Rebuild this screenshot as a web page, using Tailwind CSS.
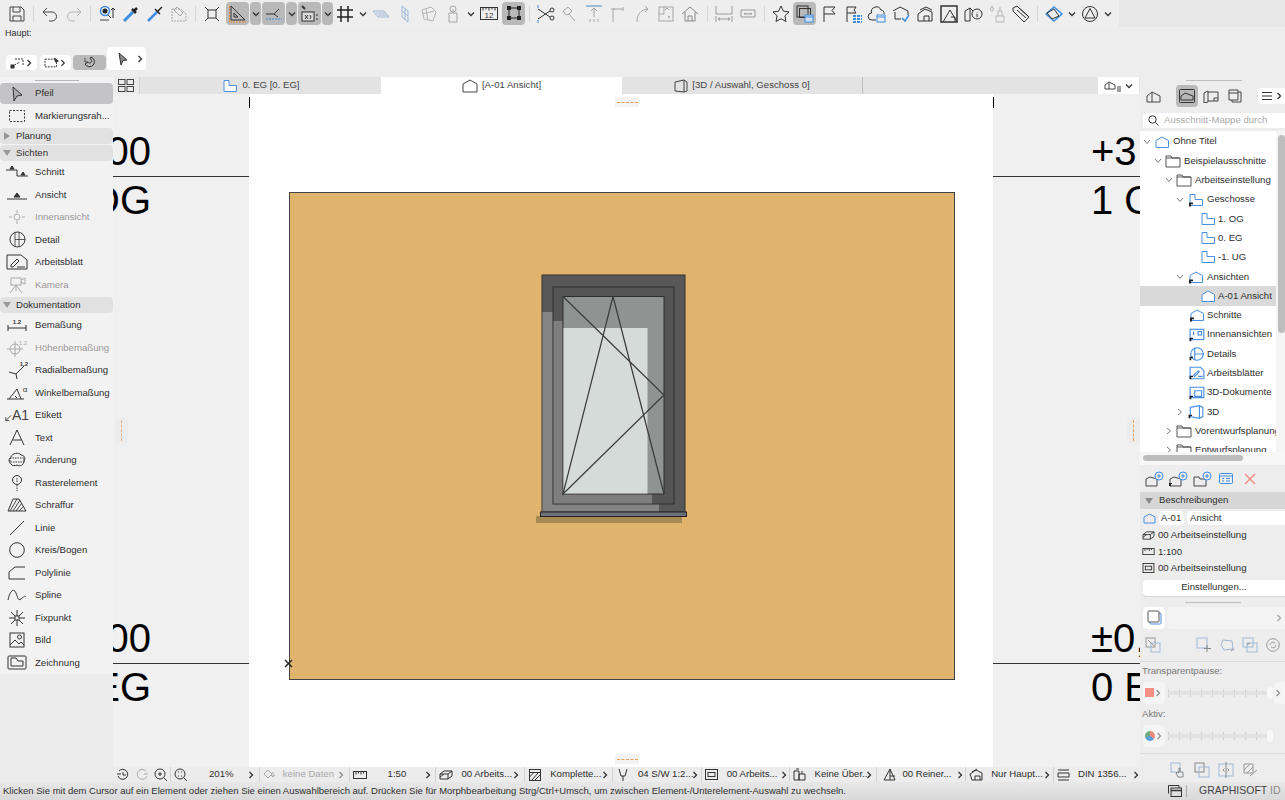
<!DOCTYPE html>
<html lang="de">
<head>
<meta charset="UTF-8" />
<title>Archicad</title>
<script src="https://cdn.jsdelivr.net/npm/@tailwindcss/browser@4"></script>
</head>
<body class="w-[1285px] h-[800px] overflow-hidden bg-[#ececec] text-[#2e2e2e] text-[9.6px] font-['Liberation_Sans',Arial,sans-serif]">

<!-- shared icons -->
<svg class="hidden">
  <symbol id="folder" viewBox="0 0 16 14"><path d="M1 3V2h5l1 2h8v9H1z" fill="none" stroke="#555"/><path d="M1 4h14" stroke="#555" fill="none"/></symbol>
  <symbol id="floor" viewBox="0 0 16 14"><path d="M2 1.500h5v5h7.500v6H2z" fill="#fff" stroke="#4a90e2"/></symbol>
  <symbol id="elev" viewBox="0 0 16 14"><path d="M2 5.500L8 2l6.500 3.500v7H2z" fill="#fff" stroke="#4a90e2"/></symbol>
  <symbol id="short" viewBox="0 0 16 14"><path d="M1 13.500V9.500h4v1.800H3v2.200z" fill="#222"/></symbol>
  <symbol id="chev" viewBox="0 0 8 8"><path d="M2.500 1L5.500 4L2.500 7" fill="none" stroke="#333" stroke-width="1.300"/></symbol>
  <symbol id="down" viewBox="0 0 8 8"><path d="M1 2.500L4 5.500L7 2.500" fill="none" stroke="#333" stroke-width="1.300"/></symbol>
  <symbol id="tdown" viewBox="0 0 8 8"><path d="M1 2L4 5.500L7 2" fill="none" stroke="#777" stroke-width="1"/></symbol>
  <symbol id="tright" viewBox="0 0 8 8"><path d="M2 1L5.500 4L2 7" fill="none" stroke="#777" stroke-width="1"/></symbol>
</svg>

<!-- top toolbar -->
<div class="h-[77px] bg-[#ededed]">
  <div class="h-[27px] w-full bg-[#e7e7e7]">
    <div class="h-[27px] w-[1119px] bg-[#eeeeee] flex items-center pl-[5px]">
      <div class="w-6 h-[23px] flex items-center justify-center"><svg class="w-[18px] h-[18px]" viewBox="0 0 18 18" fill="none" stroke="#444"><path d="M2 2h11l3 3v11H2z"/><path d="M5 2v5h7V2M5 16v-5h8v5"/></svg></div>
      <div class="w-[9px] flex justify-center"><div class="w-px h-4 bg-[#d5d5d5]"></div></div>
      <div class="w-6 h-[23px] flex items-center justify-center"><svg class="w-[18px] h-[18px]" viewBox="0 0 18 18" fill="none" stroke="#444"><path d="M6 3L2 7l4 4M2 7h9a4.500 4.500 0 0 1 0 9H8"/></svg></div>
      <div class="w-6 h-[23px] flex items-center justify-center"><svg class="w-[18px] h-[18px]" viewBox="0 0 18 18" fill="none" stroke="#b5b5b5"><path d="M12 3l4 4-4 4M16 7H7a4.500 4.500 0 0 0 0 9h3"/></svg></div>
      <div class="w-[9px] flex justify-center"><div class="w-px h-4 bg-[#d5d5d5]"></div></div>
      <div class="w-6 h-[23px] flex items-center justify-center"><svg class="w-5 h-5" viewBox="0 0 20 20" fill="none"><circle cx="8" cy="7" r="4.500" stroke="#3f8de0" stroke-width="1.500"/><circle cx="8" cy="7" r="2.500" fill="#222"/><path d="M11 11l3 3M3 16h9" stroke="#444"/><path d="M16 14V4M14 6l2-2 2 2" stroke="#333"/></svg></div>
      <div class="w-6 h-[23px] flex items-center justify-center"><svg class="w-5 h-5" viewBox="0 0 20 20" fill="none"><path d="M3 17l9-9" stroke="#3f8de0" stroke-width="3"/><path d="M11 5l4 4M13 7l3-3" stroke="#222" stroke-width="2.500"/></svg></div>
      <div class="w-6 h-[23px] flex items-center justify-center"><svg class="w-5 h-5" viewBox="0 0 20 20" fill="none"><path d="M3 17l9-9" stroke="#3f8de0" stroke-width="2.500"/><path d="M10 5l5 5M13 7l4-4" stroke="#222" stroke-width="1.500"/></svg></div>
      <div class="w-6 h-[23px] flex items-center justify-center"><svg class="w-5 h-5" viewBox="0 0 20 20" fill="none" stroke="#a5a5a5"><path d="M3 5h9l5 5v7H3z" stroke-dasharray="2 1"/><path d="M8 3l6 6-3 3-6-6z"/></svg></div>
      <div class="w-[9px] flex justify-center"><div class="w-px h-4 bg-[#d5d5d5]"></div></div>
      <div class="w-6 h-[23px] flex items-center justify-center"><svg class="w-4 h-4" viewBox="0 0 16 16" fill="none" stroke="#333"><rect x="4" y="4" width="8" height="8"/><path d="M1 1l3 3M15 1l-3 3M1 15l3-3M15 15l-3-3"/></svg></div>
      <div class="w-[23px] h-[23px] ml-[2px] rounded bg-[#b9b9b9] flex items-center justify-center"><svg class="w-5 h-5" viewBox="0 0 20 20" fill="none"><path d="M3 2v14h14z" stroke="#333"/><path d="M6 9v4h4z" stroke="#333"/><path d="M2 18h16M1.500 2v16" stroke="#e58a2e" stroke-dasharray="2 1"/></svg></div>
      <div class="w-[11px] h-[23px] ml-[1px] rounded bg-[#b9b9b9] flex items-center justify-center"><svg class="w-2 h-2"><use href="#down"/></svg></div>
      <div class="w-[23px] h-[23px] ml-[1px] rounded bg-[#b9b9b9] flex items-center justify-center"><svg class="w-5 h-5" viewBox="0 0 20 20" fill="none"><path d="M2 10h8l5-5M10 10l4 3" stroke="#333"/><path d="M2 15h16" stroke="#3f8de0" stroke-dasharray="2 1"/></svg></div>
      <div class="w-[11px] h-[23px] ml-[1px] rounded bg-[#b9b9b9] flex items-center justify-center"><svg class="w-2 h-2"><use href="#down"/></svg></div>
      <div class="w-[23px] h-[23px] ml-[1px] rounded bg-[#b9b9b9] flex items-center justify-center"><svg class="w-5 h-5" viewBox="0 0 20 20" fill="none" stroke="#333"><path d="M2 2l3 3" stroke-width="2"/><rect x="2" y="8" width="12" height="9" fill="#ddd"/><path d="M16 11h2M16 15h2M5 11l3 4M8 11l-3 4M10 11l1 2-1 2"/></svg></div>
      <div class="w-[11px] h-[23px] ml-[1px] rounded bg-[#b9b9b9] flex items-center justify-center"><svg class="w-2 h-2"><use href="#down"/></svg></div>
      <div class="w-6 h-[23px] flex items-center justify-center"><svg class="w-[18px] h-[18px]" viewBox="0 0 18 18" fill="none" stroke="#222" stroke-width="1.500"><path d="M5 1v16M12 1v16M1 5h16M1 12h16"/></svg></div>
      <div class="w-3 flex justify-center"><svg class="w-2 h-2"><use href="#down"/></svg></div>
      <div class="w-6 h-[23px] flex items-center justify-center"><svg class="w-5 h-5" viewBox="0 0 20 20" fill="none" stroke="#9db9d8"><path d="M2 7h11l5 6H7z"/><path d="M5 9h9M7 11h9"/></svg></div>
      <div class="w-6 h-[23px] flex items-center justify-center"><svg class="w-5 h-5" viewBox="0 0 20 20" fill="none" stroke="#9db9d8"><path d="M7 2l6 5v11l-6-5z"/><path d="M7 7l6 5M10 4v12"/></svg></div>
      <div class="w-6 h-[23px] flex items-center justify-center"><svg class="w-5 h-5" viewBox="0 0 20 20" fill="none" stroke="#b5b5b5"><path d="M3 6l9-3 5 5-3 9-9-2z"/><path d="M7 5l2 11M3 10l12-3"/></svg></div>
      <div class="w-6 h-[23px] flex items-center justify-center"><svg class="w-5 h-5" viewBox="0 0 20 20" fill="none" stroke="#a5a5a5"><path d="M6 18V9h8v9zM10 9V5"/><circle cx="10" cy="5" r="3"/></svg></div>
      <div class="w-3 flex justify-center"><svg class="w-2 h-2"><use href="#down"/></svg></div>
      <div class="w-6 h-[23px] flex items-center justify-center"><svg class="w-5 h-5" viewBox="0 0 20 20" fill="none" stroke="#333"><rect x="1.500" y="3.500" width="17" height="12"/><path d="M4 3.500v3M7 3.500v2M10 3.500v3M13 3.500v2M16 3.500v3"/><text x="10" y="14" font-size="8" fill="#333" stroke="none" text-anchor="middle">12</text></svg></div>
      <div class="w-[23px] h-[23px] ml-[1px] rounded bg-[#b9b9b9] flex items-center justify-center"><svg class="w-[18px] h-[18px]" viewBox="0 0 18 18" fill="none" stroke="#222"><rect x="4" y="3" width="10" height="10"/><rect x="2.500" y="1.500" width="3" height="3" fill="#222"/><rect x="12.500" y="1.500" width="3" height="3" fill="#222"/><rect x="2.500" y="11.500" width="3" height="3" fill="#222"/><rect x="12.500" y="11.500" width="3" height="3" fill="#222"/></svg></div>
      <div class="w-[9px] flex justify-center"><div class="w-px h-4 bg-[#d5d5d5]"></div></div>
      <div class="w-6 h-[23px] flex items-center justify-center"><svg class="w-5 h-5" viewBox="0 0 20 20" fill="none" stroke="#333"><path d="M2 5l12 8M2 15l12-8"/><circle cx="16" cy="6" r="2"/><circle cx="16" cy="14" r="2"/><path d="M2 1v3M2 16v3" stroke="#3f8de0"/></svg></div>
      <div class="w-6 h-[23px] flex items-center justify-center"><svg class="w-5 h-5" viewBox="0 0 20 20" fill="none" stroke="#a5a5a5"><path d="M3 7l5-4 4 4-3 3 6 7M3 7l3 4 3-1"/></svg></div>
      <div class="w-6 h-[23px] flex items-center justify-center"><svg class="w-5 h-5" viewBox="0 0 20 20" fill="none" stroke="#a5a5a5"><path d="M2 2h16" stroke="#9db9d8" stroke-width="2"/><path d="M10 4v9M7 7l3-3 3 3M6 18v-3M10 18v-3M14 18v-3"/></svg></div>
      <div class="w-6 h-[23px] flex items-center justify-center"><svg class="w-5 h-5" viewBox="0 0 20 20" fill="none" stroke="#a5a5a5"><path d="M5 18V5h10M3 5h4M15 3v4"/></svg></div>
      <div class="w-6 h-[23px] flex items-center justify-center"><svg class="w-5 h-5" viewBox="0 0 20 20" fill="none" stroke="#a5a5a5"><path d="M5 18C5 10 9 6 15 5M13 2l3 3-3 3"/></svg></div>
      <div class="w-6 h-[23px] flex items-center justify-center"><svg class="w-5 h-5" viewBox="0 0 20 20" fill="none" stroke="#a5a5a5"><rect x="3" y="3" width="14" height="14"/><path d="M3 10h5V3M9 6l2-2 2 2M12 14l2-1-2-1"/></svg></div>
      <div class="w-6 h-[23px] flex items-center justify-center"><svg class="w-5 h-5" viewBox="0 0 20 20" fill="none" stroke="#888"><path d="M2 10l8-7 8 7M5 8v9h10V8M8 17v-5h4v5"/></svg></div>
      <div class="w-[9px] ml-[1px] flex justify-center"><div class="w-px h-4 bg-[#d5d5d5]"></div></div>
      <div class="w-6 h-[23px] flex items-center justify-center"><svg class="w-5 h-5" viewBox="0 0 20 20" fill="none" stroke="#999"><path d="M2 2v8h16V2M2 12v6M18 12v6M4 15h12M4 15l2-1.500M4 15l2 1.500M16 15l-2-1.500M16 15l-2 1.500"/></svg></div>
      <div class="w-6 h-[23px] flex items-center justify-center"><svg class="w-5 h-5" viewBox="0 0 20 20" fill="none" stroke="#999"><path d="M3 6h14v7H3zM6 10h8M6 10l2-1M14 10l-2-1"/></svg></div>
      <div class="w-[9px] flex justify-center"><div class="w-px h-4 bg-[#d5d5d5]"></div></div>
      <div class="w-6 h-[23px] flex items-center justify-center"><svg class="w-5 h-5" viewBox="0 0 20 20" fill="none" stroke="#333"><path d="M10 2l2.400 5.200 5.600.7-4.100 3.900 1.100 5.700-5-2.800-5 2.800 1.100-5.700L2 7.900l5.600-.7z"/></svg></div>
      <div class="w-[23px] h-[23px] rounded bg-[#b9b9b9] flex items-center justify-center"><svg class="w-5 h-5" viewBox="0 0 20 20" fill="none"><rect x="2" y="2" width="11" height="11" stroke="#333"/><rect x="4.500" y="4.500" width="11" height="9" stroke="#333"/><rect x="10" y="11" width="8" height="7" fill="#cfe0f5" stroke="#3f8de0"/><path d="M10 13h8" stroke="#3f8de0"/></svg></div>
      <div class="w-6 h-[23px] ml-px flex items-center justify-center"><svg class="w-5 h-5" viewBox="0 0 20 20" fill="none" stroke="#333"><path d="M5 18V3h11l-3 3.500 3 3.500H5"/></svg></div>
      <div class="w-6 h-[23px] flex items-center justify-center"><svg class="w-5 h-5" viewBox="0 0 20 20" fill="none"><path d="M4 18V3h9l-2 3 2 3H4" stroke="#333"/><path d="M10 12h9M10 15h9M10 18h9" stroke="#3f8de0" stroke-width="2" stroke-dasharray="3 1"/></svg></div>
      <div class="w-6 h-[23px] flex items-center justify-center"><svg class="w-5 h-5" viewBox="0 0 20 20" fill="none"><path d="M9 16H5a3.500 3.500 0 0 1-.500-7A5 5 0 0 1 14 6a3.500 3.500 0 0 1 3 4" stroke="#333"/><rect x="10" y="11" width="8" height="7" stroke="#3f8de0"/><path d="M10 13h8" stroke="#3f8de0"/></svg></div>
      <div class="w-6 h-[23px] flex items-center justify-center"><svg class="w-5 h-5" viewBox="0 0 20 20" fill="none"><path d="M2 7l7-4 8 4v4M4 8v7h6" stroke="#333"/><path d="M11 14l3 3 4-6" stroke="#3f8de0" stroke-width="1.500"/></svg></div>
      <div class="w-6 h-[23px] flex items-center justify-center"><svg class="w-5 h-5" viewBox="0 0 20 20" fill="none" stroke="#333"><path d="M3 10l7-5 7 3v9H3z"/><path d="M5 6l6-3 6 3M9 17v-5h5v5"/></svg></div>
      <div class="w-6 h-[23px] flex items-center justify-center"><svg class="w-5 h-5" viewBox="0 0 20 20" fill="none" stroke="#333"><rect x="2" y="2" width="16" height="16" stroke-width="1.500"/><path d="M4 18L11 6l7 12M12 13h4v4"/></svg></div>
      <div class="w-6 h-[23px] flex items-center justify-center"><svg class="w-5 h-5" viewBox="0 0 20 20" fill="none" stroke="#333"><path d="M2 7l5-3v13H2zM7 4l3 3"/><circle cx="14" cy="10" r="5"/><path d="M14 8v.500M14 10v3"/></svg></div>
      <div class="w-6 h-[23px] flex items-center justify-center"><svg class="w-5 h-5" viewBox="0 0 20 20" fill="none" stroke="#b5b5b5"><path d="M5 2C3 5 3 7 5 7s2-2 0-5zM9 12h8v6H9zM11 12V7h4v5M13 7V3"/></svg></div>
      <div class="w-6 h-[23px] flex items-center justify-center"><svg class="w-5 h-5" viewBox="0 0 20 20" fill="none" stroke="#333"><path d="M2 4l4-2 12 11-5 5L2 7z"/><path d="M6 6l9 8M8 4l9 8"/></svg></div>
      <div class="w-[9px] flex justify-center"><div class="w-px h-4 bg-[#d5d5d5]"></div></div>
      <div class="w-6 h-[23px] flex items-center justify-center"><svg class="w-5 h-5" viewBox="0 0 20 20" fill="none"><path d="M2 10l8-7 8 7-8 7z" stroke="#3f8de0" stroke-width="1.500"/><path d="M3 9l7-4 5 7-7 3z" stroke="#333"/></svg></div>
      <div class="w-3 flex justify-center"><svg class="w-2 h-2"><use href="#down"/></svg></div>
      <div class="w-6 h-[23px] flex items-center justify-center"><svg class="w-[18px] h-[18px]" viewBox="0 0 18 18" fill="none" stroke="#333"><circle cx="9" cy="9" r="7.500"/><path d="M9 3.500L14 13H4z"/></svg></div>
      <div class="w-3 flex justify-center"><svg class="w-2 h-2"><use href="#down"/></svg></div>
    </div>
  </div>
  <div class="h-[50px] pl-[5px]">
    <div class="h-[20px] pb-[6px] flex items-center text-[9px]">Haupt:</div>
    <div class="flex items-end h-[23px]">
      <div class="ml-px w-[31px] h-[15px] bg-white rounded flex items-center justify-between px-[4px]"><svg class="w-[14px] h-[12px]" viewBox="0 0 14 12" fill="none" stroke="#333"><path d="M5 2h8v6M2 10l4-3 4-2" stroke-dasharray="2 1"/><rect x="1" y="8" width="3" height="3" fill="#333"/></svg><svg class="w-2 h-2"><use href="#chev"/></svg></div>
      <div class="ml-[3px] w-[31px] h-[15px] bg-white rounded flex items-center justify-between px-[4px]"><svg class="w-[16px] h-[12px]" viewBox="0 0 16 12" fill="none" stroke="#333"><rect x="1" y="2" width="12" height="8" stroke-dasharray="2 1"/><path d="M11 1l4 3-3 1z" fill="#333"/></svg><svg class="w-2 h-2"><use href="#chev"/></svg></div>
      <div class="ml-[2px] w-[33px] h-[15px] bg-[#b9b9b9] rounded flex items-center justify-center"><svg class="w-[14px] h-[14px]" viewBox="0 0 14 14" fill="none" stroke="#333"><path d="M8 1a5 5 0 1 1-6 7l3-2a2 2 0 1 0 2-3z"/><path d="M2 2v4h3" stroke-width=".8"/></svg></div>
      <div class="w-[39px] h-[23px] ml-px bg-white rounded flex items-center justify-between px-[10px] pr-[2px]"><svg class="w-[12px] h-[14px]" viewBox="0 0 12 14"><path d="M2 1l8 7-4 .500L4 13z" fill="#888" stroke="#333"/></svg><svg class="w-2 h-2"><use href="#chev"/></svg></div>
    </div>
  </div>
</div>

<div class="flex h-[705px]">
  <!-- left tool box -->
  <div class="w-[113px] shrink-0 bg-[#ececec]">
    <div class="bg-[#f3f2f3] h-[597px]">
      <div class="h-[6px] flex items-start justify-center pt-[3px]"><div class="w-[44px] h-px bg-[#b5b5b5]"></div></div>
      <div class="h-[21px] bg-[#c4c3c5] rounded flex items-center pl-[5px] font-medium"><span class="w-6 flex justify-center"><svg class="w-[18px] h-[18px]" viewBox="0 0 18 18"><path d="M5 2l9 8-5 1-3 5z" fill="#aaa" stroke="#333"/></svg></span><span class="ml-[6px]">Pfeil</span></div>
      <div class="h-[22px] mt-px flex items-center pl-[5px]"><span class="w-6 flex justify-center"><svg class="w-[18px] h-[14px]" viewBox="0 0 18 14" fill="none" stroke="#333" stroke-dasharray="2 1.500"><rect x="1.500" y="1.500" width="15" height="11"/></svg></span><span class="ml-[6px]">Markierungsrah...</span></div>
      <div class="h-4 mt-[1px] bg-[#e2e1e2] rounded-sm flex items-center pl-[3px]"><svg class="w-2 h-2" viewBox="0 0 8 8"><path d="M1 0l6 4-6 4z" fill="#999"/></svg><span class="ml-[5px]">Planung</span></div>
      <div class="h-4 mt-px bg-[#e2e1e2] rounded-sm flex items-center pl-[3px]"><svg class="w-2 h-2" viewBox="0 0 8 8"><path d="M0 1l8 0-4 6z" fill="#999"/></svg><span class="ml-[5px]">Sichten</span></div>

      <div class="h-[22.500px] flex items-center pl-[5px]"><span class="w-6 flex justify-center"><svg class="w-[22px] h-[16px]" viewBox="0 0 22 16" fill="none" stroke="#333"><path d="M0 6h11v6h11"/><path d="M4 5l2-3 2 3zM15 11l2-3 2 3z" fill="#333"/></svg></span><span class="ml-[6px]">Schnitt</span></div>
      <div class="h-[22.500px] flex items-center pl-[5px]"><span class="w-6 flex justify-center"><svg class="w-[22px] h-[16px]" viewBox="0 0 22 16" fill="none" stroke="#333"><path d="M1 12h20"/><path d="M8 10l3-4 3 4z" fill="#333"/></svg></span><span class="ml-[6px]">Ansicht</span></div>
      <div class="h-[22.500px] flex items-center pl-[5px] text-[#999]"><span class="w-6 flex justify-center"><svg class="w-[18px] h-[16px]" viewBox="0 0 18 16" fill="none" stroke="#aaa"><circle cx="9" cy="8" r="3"/><path d="M1 8h3M14 8h3M9 1v3M9 12v3"/></svg></span><span class="ml-[6px]">Innenansicht</span></div>
      <div class="h-[22.500px] flex items-center pl-[5px]"><span class="w-6 flex justify-center"><svg class="w-[17px] h-[17px]" viewBox="0 0 17 17" fill="none" stroke="#333"><circle cx="8.500" cy="8.500" r="7.500"/><path d="M6 1.500v14M6 8.500h10M10 1.500v14" stroke-width=".8"/></svg></span><span class="ml-[6px]">Detail</span></div>
      <div class="h-[22.500px] flex items-center pl-[5px]"><span class="w-6 flex justify-center"><svg class="w-[22px] h-[16px]" viewBox="0 0 22 16" fill="none" stroke="#333"><path d="M1 1h14l6 5v9H1z"/><path d="M5 11l6-6 2 2-6 6H5zM11 13h8"/></svg></span><span class="ml-[6px]">Arbeitsblatt</span></div>
      <div class="h-[22.500px] flex items-center pl-[5px] text-[#999]"><span class="w-6 flex justify-center"><svg class="w-[18px] h-[18px]" viewBox="0 0 18 18" fill="none" stroke="#aaa"><rect x="3" y="2" width="10" height="7"/><path d="M13 4l4-2v6l-4-2M8 9l-6 8M8 9l6 8M8 9v6"/></svg></span><span class="ml-[6px]">Kamera</span></div>

      <div class="h-4 mt-px bg-[#e2e1e2] rounded-sm flex items-center pl-[3px]"><svg class="w-2 h-2" viewBox="0 0 8 8"><path d="M0 1l8 0-4 6z" fill="#999"/></svg><span class="ml-[5px]">Dokumentation</span></div>

      <div class="h-[22.500px] mt-px flex items-center pl-[5px]"><span class="w-6 flex justify-center"><svg class="w-[22px] h-[16px]" viewBox="0 0 22 16" fill="none" stroke="#333"><path d="M2 11h18M2 8v6M20 8v6"/><text x="11" y="7" font-size="6" font-weight="bold" fill="#333" stroke="none" text-anchor="middle">1.2</text></svg></span><span class="ml-[6px]">Bemaßung</span></div>
      <div class="h-[22.500px] flex items-center pl-[5px] text-[#999]"><span class="w-6 flex justify-center"><svg class="w-[22px] h-[18px]" viewBox="0 0 22 18" fill="none" stroke="#aaa"><circle cx="9" cy="10" r="5"/><path d="M1 10h16M9 2v16"/><text x="17" y="6" font-size="6" fill="#aaa" stroke="none" text-anchor="middle">1.2</text></svg></span><span class="ml-[6px]">Höhenbemaßung</span></div>
      <div class="h-[22.500px] flex items-center pl-[5px]"><span class="w-6 flex justify-center"><svg class="w-[22px] h-[18px]" viewBox="0 0 22 18" fill="none" stroke="#333"><path d="M3 11l7 2 8-8M10 13l1 5"/><text x="18" y="5" font-size="6" font-weight="bold" fill="#333" stroke="none" text-anchor="middle">1.2</text></svg></span><span class="ml-[6px]">Radialbemaßung</span></div>
      <div class="h-[22.500px] flex items-center pl-[5px]"><span class="w-6 flex justify-center"><svg class="w-[22px] h-[16px]" viewBox="0 0 22 16" fill="none" stroke="#333"><path d="M1 14h17M3 14L11 4l4 10M9 11l2 2"/><text x="19" y="7" font-size="8" fill="#333" stroke="none" text-anchor="middle">α</text></svg></span><span class="ml-[6px]">Winkelbemaßung</span></div>
      <div class="h-[22.500px] flex items-center pl-[5px]"><span class="w-6 flex justify-center text-[14px] leading-none items-end text-[#444]"><svg class="w-[8px] h-[8px]" viewBox="0 0 8 8" fill="none" stroke="#333"><path d="M7 1L1 7M1 3v4h4"/></svg><span>A1</span></span><span class="ml-[6px]">Etikett</span></div>
      <div class="h-[22.500px] flex items-center pl-[5px]"><span class="w-6 flex justify-center"><svg class="w-4 h-[17px]" viewBox="0 0 16 17" fill="none" stroke="#333"><path d="M1 16L8 1l7 15M4 11h8"/></svg></span><span class="ml-[6px]">Text</span></div>
      <div class="h-[22.500px] flex items-center pl-[5px]"><span class="w-6 flex justify-center"><svg class="w-[18px] h-[16px]" viewBox="0 0 18 16" fill="none" stroke="#333"><path d="M3 12C0 10 1 6 3 5c1-4 8-5 10-2 3 0 5 3 3 6 0 4-4 6-7 4-2 1-5 1-6-1z"/><path d="M2 6h14v4H2z" stroke-dasharray="1.500 1"/></svg></span><span class="ml-[6px]">Änderung</span></div>
      <div class="h-[22.500px] flex items-center pl-[5px]"><span class="w-6 flex justify-center"><svg class="w-[14px] h-[18px]" viewBox="0 0 14 18" fill="none" stroke="#333"><circle cx="7" cy="6" r="4.500"/><path d="M7 4v4M7 11v6" stroke-dasharray="1.500 1"/></svg></span><span class="ml-[6px]">Rasterelement</span></div>
      <div class="h-[22.500px] flex items-center pl-[5px]"><span class="w-6 flex justify-center"><svg class="w-5 h-[14px]" viewBox="0 0 20 14" fill="none" stroke="#333"><path d="M1 13L6 1h6l7 12z"/><path d="M3 13l7-12M6 13l7-11M9 13l6-8M12 13l5-5" stroke-width=".9"/></svg></span><span class="ml-[6px]">Schraffur</span></div>
      <div class="h-[22.500px] flex items-center pl-[5px]"><span class="w-6 flex justify-center"><svg class="w-4 h-4" viewBox="0 0 16 16" fill="none" stroke="#333"><path d="M1 15L15 1"/></svg></span><span class="ml-[6px]">Linie</span></div>
      <div class="h-[22.500px] flex items-center pl-[5px]"><span class="w-6 flex justify-center"><svg class="w-4 h-4" viewBox="0 0 16 16" fill="none" stroke="#333"><circle cx="8" cy="8" r="7.300"/></svg></span><span class="ml-[6px]">Kreis/Bogen</span></div>
      <div class="h-[22.500px] flex items-center pl-[5px]"><span class="w-6 flex justify-center"><svg class="w-[18px] h-[14px]" viewBox="0 0 18 14" fill="none" stroke="#333"><path d="M17 1H7L1 6v7h16"/></svg></span><span class="ml-[6px]">Polylinie</span></div>
      <div class="h-[22.500px] flex items-center pl-[5px]"><span class="w-6 flex justify-center"><svg class="w-5 h-3" viewBox="0 0 20 12" fill="none" stroke="#333"><path d="M1 11C3 1 7-1 9 4s2 8 5 6 3-4 5-2"/></svg></span><span class="ml-[6px]">Spline</span></div>
      <div class="h-[22.500px] flex items-center pl-[5px]"><span class="w-6 flex justify-center"><svg class="w-4 h-4" viewBox="0 0 16 16" fill="none" stroke="#333"><path d="M0 8h16M8 0v16M2 2l12 12M14 2L2 14"/><rect x="6" y="6" width="4" height="4" fill="#f3f2f3"/></svg></span><span class="ml-[6px]">Fixpunkt</span></div>
      <div class="h-[22.500px] flex items-center pl-[5px]"><span class="w-6 flex justify-center"><svg class="w-4 h-4" viewBox="0 0 16 16" fill="none" stroke="#333"><rect x="1" y="1" width="14" height="14"/><circle cx="10.500" cy="5" r="2"/><path d="M1 13l5-5 4 4 2-2 3 3"/></svg></span><span class="ml-[6px]">Bild</span></div>
      <div class="h-[22.500px] flex items-center pl-[5px]"><span class="w-6 flex justify-center"><svg class="w-5 h-[15px]" viewBox="0 0 20 15" fill="none" stroke="#333"><rect x="1" y="1" width="18" height="13" rx="1"/><path d="M4 11V3h5l2 3h5v5z"/></svg></span><span class="ml-[6px]">Zeichnung</span></div>
    </div>
  </div>

  <!-- center -->
  <div class="flex-1 flex flex-col min-w-0">
    <div class="h-[17px] flex bg-[#e3e3e3] text-[#444]">
      <div class="w-[27px] flex items-center justify-center border-r border-[#cfcfcf] bg-[#ebebeb] mr-px"><svg class="w-4 h-[13px]" viewBox="0 0 16 13" fill="none" stroke="#444"><rect x=".5" y=".5" width="6.500" height="5"/><rect x="9" y=".5" width="6.500" height="5"/><rect x=".5" y="7.500" width="6.500" height="5"/><rect x="9" y="7.500" width="6.500" height="5"/></svg></div>
      <div class="w-[240px] flex items-center justify-center gap-1"><svg class="w-4 h-[14px]"><use href="#floor"/></svg>0. EG [0. EG]</div>
      <div class="w-[241px] flex items-center justify-center gap-1 bg-white"><svg class="w-4 h-[14px]" viewBox="0 0 16 14" fill="none" stroke="#444"><path d="M1 5L8 1l7 4v8H1z"/></svg>[A-01 Ansicht]</div>
      <div class="w-[241px] flex items-center justify-center gap-1 border-r border-[#bdbdbd]"><svg class="w-[14px] h-[14px]" viewBox="0 0 14 14" fill="none" stroke="#444"><path d="M1 3l9-2 3 2v9l-3 1-9-1z"/><path d="M10 1v12"/></svg>[3D / Auswahl, Geschoss 0]</div>
      <div class="w-[235px]"></div>
      <div class="w-[41px] bg-white flex items-center justify-center gap-[3px]"><svg class="w-[18px] h-[12px]" viewBox="0 0 18 12" fill="none" stroke="#444"><path d="M1 9V5l4-3 6 3v4zM5 2v7"/><path d="M13 7h4M13 9h4M13 11h4"/></svg><svg class="w-2 h-2"><use href="#down"/></svg></div>
    </div>

    <!-- drawing canvas -->
    <div class="relative h-[673px] bg-[#f0f0f0] overflow-hidden">
      <div class="absolute left-[136px] top-0 w-[744px] h-full bg-white"></div>
      <div class="absolute left-[136px] top-[3px] w-px h-[11px] bg-black"></div>
      <div class="absolute left-[880px] top-[3px] w-px h-[11px] bg-black"></div>
      <div class="absolute left-0 top-[82px] w-[136px] h-px bg-[#333]"></div>
      <div class="absolute left-[880px] top-[82px] w-[147px] h-px bg-[#333]"></div>
      <div class="absolute left-0 top-[569px] w-[136px] h-px bg-[#333]"></div>
      <div class="absolute left-[880px] top-[569px] w-[147px] h-px bg-[#333]"></div>

      <div class="absolute right-[989px] top-[34px] text-[40px] leading-[46px] text-black whitespace-nowrap">00</div>
      <div class="absolute right-[989px] top-[83px] text-[40px] leading-[46px] text-black whitespace-nowrap">OG</div>
      <div class="absolute right-[989px] top-[521px] text-[40px] leading-[46px] text-black whitespace-nowrap">00</div>
      <div class="absolute right-[989px] top-[570px] text-[40px] leading-[46px] text-black whitespace-nowrap">EG</div>
      <div class="absolute left-[978px] top-[34px] text-[40px] leading-[46px] text-black whitespace-nowrap">+3</div>
      <div class="absolute left-[978px] top-[83px] text-[40px] leading-[46px] text-black whitespace-nowrap">1 O</div>
      <div class="absolute left-[978px] top-[521px] text-[40px] leading-[46px] text-black whitespace-nowrap">±0,</div>
      <div class="absolute left-[978px] top-[570px] text-[40px] leading-[46px] text-black whitespace-nowrap">0 E</div>

      <div class="absolute left-[176px] top-[98px] w-[666px] h-[488px] bg-[#e0b46c] border border-[#444]"></div>

      <svg class="absolute left-[417px] top-[171px]" width="170" height="265" viewBox="0 0 170 265">
        <rect x="6" y="251" width="146" height="7" fill="#a58a52"/>
        <rect x="12" y="10" width="143" height="237" fill="#585858" stroke="#333"/>
        <path d="M12.500 47H23v192h106v7.500H12.500z" fill="#848484"/>
        <rect x="23" y="22" width="121" height="217" fill="#555" stroke="#2e2e2e"/>
        <path d="M23.500 56H33v173h89v9.500H23.500z" fill="#7e7e7e"/>
        <rect x="33" y="31.500" width="101" height="197.500" fill="#8f9391" stroke="#2e2e2e"/>
        <rect x="33.500" y="63" width="84" height="165.500" fill="#d5dbd9"/>
        <path d="M33 31.500L134 130 33 229 83 31.500 134 229" fill="none" stroke="#3a3a3a" stroke-width="1.200"/>
        <rect x="10.500" y="247" width="146" height="4.500" fill="#6c7278" stroke="#222"/>
      </svg>

      <svg class="absolute left-[171px] top-[565px]" width="9" height="9" viewBox="0 0 9 9" fill="none" stroke="#222" stroke-width="1.400"><path d="M1 1l7 7M8 1L1 8"/></svg>

      <!-- stretch handles -->
      <div class="absolute left-[502px] top-[3px] w-[24px] h-[10px] bg-[#f3f3f3] flex items-center justify-center"><div class="w-[21px] border-t border-dashed border-[#e8a15a]"></div></div>
      <div class="absolute left-[502px] top-[660px] w-[24px] h-[10px] bg-[#f3f3f3] flex items-center justify-center"><div class="w-[21px] border-t border-dashed border-[#e8a15a]"></div></div>
      <div class="absolute left-[2px] top-[324px] w-[13px] h-[25px] bg-[#ececec] rounded-sm flex items-center justify-center"><div class="h-[21px] border-l border-dashed border-[#e8b080]"></div></div>
      <div class="absolute left-[1014px] top-[324px] w-[13px] h-[25px] bg-[#ececec] rounded-sm flex items-center justify-center"><div class="h-[21px] border-l border-dashed border-[#e8a15a]"></div></div>
    </div>

    <!-- status bar -->
    <div class="h-[15px] flex items-center bg-[#ececec] whitespace-nowrap">
      <div class="w-[58px] flex items-center border-r border-[#d2d2d2] h-full">
        <span class="w-[19px] flex justify-center"><svg class="w-[14px] h-[14px]" viewBox="0 0 14 14" fill="none" stroke="#333"><path d="M3 3a5 5 0 1 1-1 5M1 6h4M7 4v3h3"/></svg></span>
        <span class="w-[19px] flex justify-center"><svg class="w-[14px] h-[14px]" viewBox="0 0 14 14" fill="none" stroke="#aaa"><path d="M11 3a5 5 0 1 0 1 5M13 6H9"/></svg></span>
        <span class="w-[19px] flex justify-center"><svg class="w-[14px] h-[14px]" viewBox="0 0 14 14" fill="none" stroke="#333"><circle cx="6" cy="6" r="5"/><path d="M9.500 9.500L13 13M4 6h4M6 4v4"/></svg></span>
      </div>
      <div class="w-[89px] flex items-center border-r border-[#d2d2d2] h-full">
        <span class="w-5 flex justify-center"><svg class="w-[14px] h-[14px]" viewBox="0 0 14 14" fill="none" stroke="#333"><circle cx="6" cy="6" r="5"/><path d="M9.500 9.500L13 13M4 4h1M7 4h1M4 8h1M7 8h1"/></svg></span>
        <span class="w-[50px] pl-[18px]">201%</span><span class="ml-[6px]"><svg class="w-2 h-2"><use href="#chev"/></svg></span>
      </div>
      <div class="w-[90px] flex items-center border-r border-[#d2d2d2] h-full text-[#aaa]">
        <span class="w-5 flex justify-center"><svg class="w-[13px] h-[13px]" viewBox="0 0 13 13" fill="none" stroke="#aaa"><path d="M1 6l4-4 4 4-4 4zM10 4v5M8 7l2 2 2-2"/></svg></span>
        <span class="ml-[3px] w-[54px]">keine Daten</span><svg class="w-2 h-2 opacity-50"><use href="#chev"/></svg>
      </div>
      <div class="w-[87px] flex items-center border-r border-[#d2d2d2] h-full">
        <span class="w-5 flex justify-center"><svg class="w-[14px] h-[8px]" viewBox="0 0 14 8" fill="none" stroke="#333"><rect x=".5" y=".5" width="13" height="7"/><path d="M3 .5v3M5.500 .5v2M8 .5v3M10.500 .5v2"/></svg></span>
        <span class="w-[54px] pl-[18px]">1:50</span><svg class="w-2 h-2"><use href="#chev"/></svg>
      </div>
      <div class="w-[89px] flex items-center border-r border-[#d2d2d2] h-full">
        <span class="w-5 flex justify-center"><svg class="w-[14px] h-[12px]" viewBox="0 0 14 12" fill="none" stroke="#333"><path d="M1 5l4-3h8L9 5zM1 8l4-3M1 5v5h8l4-3V2M9 5v5"/></svg></span>
        <span class="ml-[5px] w-[51px]">00 Arbeits...</span><svg class="w-2 h-2"><use href="#chev"/></svg>
      </div>
      <div class="w-[88px] flex items-center border-r border-[#d2d2d2] h-full">
        <span class="w-5 flex justify-center"><svg class="w-[12px] h-[12px]" viewBox="0 0 12 12" fill="none" stroke="#333"><rect x=".5" y=".5" width="11" height="11"/><path d="M.5 3.500h11M3 11l6-7M6 11l5-5M.5 8l4-4"/></svg></span>
        <span class="ml-[5px] w-[51px]">Komplette...</span><svg class="w-2 h-2"><use href="#chev"/></svg>
      </div>
      <div class="w-[89px] flex items-center border-r border-[#d2d2d2] h-full">
        <span class="w-5 flex justify-center"><svg class="w-[10px] h-[13px]" viewBox="0 0 10 13" fill="none" stroke="#333"><path d="M1 1l2 7h4l2-7M5 8v5"/></svg></span>
        <span class="ml-[5px] w-[53px]">04 S/W 1:2...</span><svg class="w-2 h-2"><use href="#chev"/></svg>
      </div>
      <div class="w-[88px] flex items-center border-r border-[#d2d2d2] h-full">
        <span class="w-5 flex justify-center"><svg class="w-[13px] h-[11px]" viewBox="0 0 13 11" fill="none" stroke="#333"><rect x=".5" y=".5" width="12" height="10"/><rect x="3" y="3.500" width="7" height="4"/></svg></span>
        <span class="ml-[5px] w-[53px]">00 Arbeits...</span><svg class="w-2 h-2"><use href="#chev"/></svg>
      </div>
      <div class="w-[88px] flex items-center border-r border-[#d2d2d2] h-full">
        <span class="w-5 flex justify-center"><svg class="w-[13px] h-[13px]" viewBox="0 0 13 13" fill="none" stroke="#333"><path d="M1 3h5v9H1zM6 6h6v6H6zM3 1h3M9 3v3"/></svg></span>
        <span class="ml-[5px] w-[50px]">Keine Über...</span><svg class="w-2 h-2"><use href="#chev"/></svg>
      </div>
      <div class="w-[89px] flex items-center border-r border-[#d2d2d2] h-full">
        <span class="w-5 ml-[2px] flex justify-center"><svg class="w-[13px] h-[13px]" viewBox="0 0 13 13" fill="none" stroke="#333"><path d="M1 12h11L7 1zM7 1v11M7 8h5"/></svg></span>
        <span class="ml-[3px] w-[54px]">00 Reiner...</span><svg class="w-2 h-2"><use href="#chev"/></svg>
      </div>
      <div class="w-[88px] flex items-center border-r border-[#d2d2d2] h-full">
        <span class="w-5 flex justify-center"><svg class="w-[14px] h-[13px]" viewBox="0 0 14 13" fill="none" stroke="#333"><path d="M1 6l6-4 6 3v7H3zM3 4l5-3M6 12V8h5v4"/></svg></span>
        <span class="ml-[5px] w-[52px]">Nur Haupt...</span><svg class="w-2 h-2"><use href="#chev"/></svg>
      </div>
      <div class="flex-1 flex items-center h-full">
        <span class="w-5 flex justify-center"><svg class="w-[13px] h-[12px]" viewBox="0 0 13 12" fill="none" stroke="#333"><path d="M1 1h11M1 11h11M1 4h11v4H1z"/></svg></span>
        <span class="ml-[4px] w-[54px]">DIN 1356...</span><svg class="w-2 h-2"><use href="#chev"/></svg>
      </div>
    </div>
  </div>

  <!-- right navigator -->
  <div class="w-[145px] shrink-0 bg-[#ededed] flex flex-col overflow-hidden">
    <div class="h-[36px] relative flex items-start">
      <div class="absolute left-[46px] top-[3px] w-[56px] h-px bg-[#bdbdbd]"></div>
      <div class="w-[36px] h-[22px] mt-[8px] flex items-center justify-start pl-[6px]"><svg class="w-[16px] h-[13px]" viewBox="0 0 16 13" fill="none" stroke="#444"><path d="M1 12V6l5-4 8 4v6zM6 2v10"/></svg></div>
      <div class="w-[22px] h-[22px] mt-[8px] rounded bg-[#b9b9b9] flex items-center justify-center"><svg class="w-[16px] h-[14px]" viewBox="0 0 16 14" fill="none" stroke="#333"><rect x=".5" y=".5" width="15" height="13" rx="1"/><path d="M2 11V7l4-3 8 3v4z"/></svg></div>
      <div class="w-[24px] h-[22px] mt-[8px] ml-px flex items-center justify-center"><svg class="w-[16px] h-[13px]" viewBox="0 0 16 13" fill="none" stroke="#444"><path d="M1 3l4-2v11l-4 1zM5 2h10v9H5M11 8h4M11 11V8"/></svg></div>
      <div class="w-[24px] h-[22px] mt-[8px] flex items-center justify-center"><svg class="w-[14px] h-[16px]" viewBox="0 0 14 16" fill="none" stroke="#444"><path d="M1 2h9v10H1zM10 4h3v10H4v-2M1 5h9"/></svg></div>
      <div class="ml-[11px] mt-[11px] w-[27px] h-[16px] bg-white rounded-l flex items-center pl-[3px] gap-[2px]"><svg class="w-[12px] h-[10px]" viewBox="0 0 12 10" stroke="#333"><path d="M1 1.500h10M1 5h10M1 8.500h10"/></svg><svg class="w-2 h-2"><use href="#chev"/></svg></div>
    </div>
    <div class="h-[15px] ml-[3px] bg-white flex items-center pl-[5px] text-[#aaa] whitespace-nowrap overflow-hidden">
      <svg class="w-[11px] h-[11px] shrink-0" viewBox="0 0 11 11" fill="none" stroke="#333"><circle cx="4.500" cy="4.500" r="3.700"/><path d="M7.500 7.500L10.500 10.500"/></svg>
      <span class="ml-[5px]">Ausschnitt-Mappe durch</span>
    </div>
    <div class="h-[3px]"></div>

    <!-- tree -->
    <div class="h-[321px] flex bg-white relative">
      <div class="w-[136px] h-full overflow-hidden pt-px whitespace-nowrap">
        <div class="h-[19.300px] flex items-center pl-[3px]"><svg class="w-2 h-2 shrink-0"><use href="#tdown"/></svg><svg class="w-4 h-[14px] ml-[3px] shrink-0"><use href="#elev"/></svg><span class="ml-[3px]">Ohne Titel</span></div>
        <div class="h-[19.300px] flex items-center pl-[14px]"><svg class="w-2 h-2 shrink-0"><use href="#tdown"/></svg><svg class="w-4 h-[14px] ml-[3px] shrink-0"><use href="#folder"/></svg><span class="ml-[3px]">Beispielausschnitte</span></div>
        <div class="h-[19.300px] flex items-center pl-[25px]"><svg class="w-2 h-2 shrink-0"><use href="#tdown"/></svg><svg class="w-4 h-[14px] ml-[3px] shrink-0"><use href="#folder"/></svg><span class="ml-[3px]">Arbeitseinstellung</span></div>
        <div class="h-[19.300px] flex items-center pl-[36px]"><svg class="w-2 h-2 shrink-0"><use href="#tdown"/></svg><svg class="w-4 h-[14px] ml-[4px] shrink-0"><use href="#floor"/><use href="#short"/></svg><span class="ml-[3px]">Geschosse</span></div>
        <div class="h-[19.300px] flex items-center pl-[60px]"><svg class="w-4 h-[14px] shrink-0"><use href="#floor"/></svg><span class="ml-[2px]">1. OG</span></div>
        <div class="h-[19.300px] flex items-center pl-[60px]"><svg class="w-4 h-[14px] shrink-0"><use href="#floor"/></svg><span class="ml-[2px]">0. EG</span></div>
        <div class="h-[19.300px] flex items-center pl-[60px]"><svg class="w-4 h-[14px] shrink-0"><use href="#floor"/></svg><span class="ml-[2px]">-1. UG</span></div>
        <div class="h-[19.300px] flex items-center pl-[36px]"><svg class="w-2 h-2 shrink-0"><use href="#tdown"/></svg><svg class="w-4 h-[14px] ml-[4px] shrink-0"><use href="#elev"/><use href="#short"/></svg><span class="ml-[3px]">Ansichten</span></div>
        <div class="h-[19.300px] flex items-center pl-[60px] bg-[#d9d9d9]"><svg class="w-4 h-[14px] shrink-0"><use href="#elev"/></svg><span class="ml-[2px]">A-01 Ansicht</span></div>
        <div class="h-[19.300px] flex items-center pl-[49px]"><svg class="w-4 h-[14px] shrink-0"><use href="#elev"/><use href="#short"/></svg><span class="ml-[2px]">Schnitte</span></div>
        <div class="h-[19.300px] flex items-center pl-[49px]"><svg class="w-4 h-[14px] shrink-0" viewBox="0 0 14 12" fill="none" stroke="#4a90e2"><rect x="1" y="1" width="12" height="9"/><rect x="8" y="3" width="3" height="3"/><path d="M4 3v3"/><path d="M.5 11.500v-3h3v1H2v2z" fill="#222" stroke="none"/></svg><span class="ml-[2px]">Innenansichten</span></div>
        <div class="h-[19.300px] flex items-center pl-[49px]"><svg class="w-4 h-[14px] shrink-0" viewBox="0 0 14 12" fill="none" stroke="#4a90e2"><circle cx="7" cy="6" r="5.500"/><path d="M5 .5v11M5 6h8"/><path d="M.5 11.500v-3h3v1H2v2z" fill="#222" stroke="none"/></svg><span class="ml-[2px]">Details</span></div>
        <div class="h-[19.300px] flex items-center pl-[49px]"><svg class="w-4 h-[14px] shrink-0" viewBox="0 0 14 12" fill="none" stroke="#4a90e2"><path d="M1 1h9l3 3v7H1z"/><path d="M4 8l4-4 1 1-4 4zM8 9h4"/><path d="M.5 11.500v-3h3v1H2v2z" fill="#222" stroke="none"/></svg><span class="ml-[2px]">Arbeitsblätter</span></div>
        <div class="h-[19.300px] flex items-center pl-[49px]"><svg class="w-4 h-[14px] shrink-0" viewBox="0 0 14 12" fill="none" stroke="#4a90e2"><path d="M1 1h12v9H1z"/><path d="M5 4h6v5H5z"/><path d="M.5 11.500v-3h3v1H2v2z" fill="#222" stroke="none"/></svg><span class="ml-[2px]">3D-Dokumente</span></div>
        <div class="h-[19.300px] flex items-center pl-[36px]"><svg class="w-2 h-2 shrink-0"><use href="#tright"/></svg><svg class="w-4 h-[14px] ml-[4px] shrink-0" viewBox="0 0 14 12" fill="none" stroke="#4a90e2"><path d="M2 2l8-1.500 3 1.500v8l-3 1.500-8-1.500zM10 .5v11"/><path d="M.5 11.500v-3h3v1H2v2z" fill="#222" stroke="none"/></svg><span class="ml-[3px]">3D</span></div>
        <div class="h-[19.300px] flex items-center pl-[25px]"><svg class="w-2 h-2 shrink-0"><use href="#tright"/></svg><svg class="w-4 h-[14px] ml-[3px] shrink-0"><use href="#folder"/></svg><span class="ml-[3px]">Vorentwurfsplanung</span></div>
        <div class="h-[19.300px] flex items-center pl-[25px]"><svg class="w-2 h-2 shrink-0"><use href="#tright"/></svg><svg class="w-4 h-[14px] ml-[3px] shrink-0"><use href="#folder"/></svg><span class="ml-[3px]">Entwurfsplanung</span></div>
      </div>
      <div class="flex-1 bg-[#f5f5f5] pl-[2px] pt-[4px]"><div class="w-[7px] h-[198px] rounded-full bg-[#bdbdbd]"></div></div>
    </div>
    <div class="h-[13px] bg-[#f7f7f7] pl-[3px] pt-[3px]"><div class="w-[100px] h-[6px] rounded-full bg-[#bdbdbd]"></div></div>

    <!-- organizer buttons -->
    <div class="h-[27px] flex items-center pl-[2px]">
      <span class="w-6 flex justify-center"><svg class="w-5 h-4" viewBox="0 0 20 16" fill="none" stroke="#444"><path d="M2 15V8l4-2 7 2v7z"/><circle cx="15" cy="5" r="4" fill="#ededed" stroke="#3f8de0"/><path d="M15 3v4M13 5h4" stroke="#3f8de0"/></svg></span>
      <span class="w-6 flex justify-center"><svg class="w-5 h-4" viewBox="0 0 20 16" fill="none" stroke="#444"><path d="M2 15V8l4-2 7 2v7z"/><path d="M1 15v-3h3v1H3v2z" fill="#222" stroke="none"/><circle cx="15" cy="5" r="4" fill="#ededed" stroke="#3f8de0"/><path d="M15 3v4M13 5h4" stroke="#3f8de0"/></svg></span>
      <span class="w-6 flex justify-center"><svg class="w-5 h-4" viewBox="0 0 20 16" fill="none" stroke="#444"><path d="M2 15V6h5l1 2h6v7z"/><circle cx="15" cy="5" r="4" fill="#ededed" stroke="#3f8de0"/><path d="M15 3v4M13 5h4" stroke="#3f8de0"/></svg></span>
      <span class="w-6 flex justify-center"><svg class="w-[14px] h-[11px]" viewBox="0 0 14 11" fill="none" stroke="#3f8de0"><rect x=".5" y=".5" width="13" height="10" rx="1"/><path d="M.5 3h13M3 5.500h2M7 5.500h4M3 8h2M7 8h4"/></svg></span>
      <span class="w-6 flex justify-center"><svg class="w-3 h-3" viewBox="0 0 12 12" fill="none" stroke="#ef8b7c" stroke-width="1.400"><path d="M1 1l10 10M11 1L1 11"/></svg></span>
    </div>
    <div class="h-[17px] bg-[#d6d6d6] flex items-center pl-[5px]"><svg class="w-2 h-2" viewBox="0 0 8 8"><path d="M0 1l8 0-4 6z" fill="#888"/></svg><span class="ml-[6px]">Beschreibungen</span></div>
    <div class="h-[18px] flex items-center pl-[3px]">
      <svg class="w-[13px] h-[11px] shrink-0" viewBox="0 0 13 11" fill="none" stroke="#4a90e2"><path d="M1 4l5.500-3L12 4v6H1z"/></svg>
      <span class="ml-[3px] w-[25px] h-[14px] bg-white rounded-sm flex items-center pl-[2px]">A-01</span>
      <span class="ml-[3px] flex-1 h-[14px] bg-white rounded-l-sm flex items-center pl-[3px]">Ansicht</span>
    </div>
    <div class="h-[16.500px] flex items-center pl-[2px]"><svg class="w-[13px] h-[11px] shrink-0" viewBox="0 0 14 12" fill="none" stroke="#333"><path d="M1 5l4-3h8L9 5zM1 8l4-3M1 5v5h8l4-3V2M9 5v5"/></svg><span class="ml-[3px]">00 Arbeitseinstellung</span></div>
    <div class="h-[16.500px] flex items-center pl-[2px]"><svg class="w-[13px] h-[7px] shrink-0" viewBox="0 0 14 8" fill="none" stroke="#333"><rect x=".5" y=".5" width="13" height="7"/><path d="M3 .5v3M5.500 .5v2M8 .5v3M10.500 .5v2"/></svg><span class="ml-[3px]">1:100</span></div>
    <div class="h-[16.500px] flex items-center pl-[2px]"><svg class="w-[13px] h-[10px] shrink-0" viewBox="0 0 13 11" fill="none" stroke="#333"><rect x=".5" y=".5" width="12" height="10"/><rect x="3" y="3.500" width="7" height="4"/></svg><span class="ml-[3px]">00 Arbeitseinstellung</span></div>
    <div class="h-[16px] ml-[3px] mt-[3px] bg-white rounded-l flex items-center justify-center shadow-[0_1px_0_#d8d8d8]">Einstellungen...</div>
    <div class="h-[11px] pt-[6px] flex justify-center"><div class="w-[56px] h-px bg-[#bdbdbd]"></div></div>
    <div class="h-[22px] flex pl-[3px]">
      <div class="w-[22px] bg-white rounded flex items-center justify-center"><svg class="w-[15px] h-[15px]" viewBox="0 0 15 15" fill="none"><rect x="3" y="3" width="11" height="11" rx="1" stroke="#4a90e2"/><rect x="1" y="1" width="11" height="11" rx="1" fill="#fff" stroke="#555"/></svg></div>
      <div class="ml-[2px] flex-1 bg-[#f3f3f3] rounded-l flex items-center justify-end pr-[2px]"><svg class="w-2 h-2 opacity-40"><use href="#chev"/></svg></div>
    </div>
    <div class="h-[32px] flex items-center pl-[4px]">
      <span class="w-[18px] flex justify-center"><svg class="w-4 h-4" viewBox="0 0 16 16" fill="none" stroke="#999"><rect x="1" y="1" width="9" height="9"/><rect x="6" y="6" width="9" height="9" stroke="#9db9d8"/><path d="M3 3l6 6"/></svg></span>
      <span class="ml-[31px] w-6 flex justify-center"><svg class="w-4 h-4" viewBox="0 0 16 16" fill="none" stroke="#9db9d8"><rect x="1" y="1" width="10" height="10"/><path d="M11 8v7M8 11.500h7" stroke="#888"/></svg></span>
      <span class="w-6 flex justify-center"><svg class="w-4 h-4" viewBox="0 0 16 16" fill="none" stroke="#9db9d8"><path d="M4 3l9 1 1 8-9 1-3-5z"/><path d="M12 14l3-2" stroke="#888"/></svg></span>
      <span class="w-6 flex justify-center"><svg class="w-4 h-4" viewBox="0 0 16 16" fill="none" stroke="#9db9d8"><rect x="1" y="1" width="10" height="9"/><rect x="5" y="6" width="10" height="9"/><path d="M5 8l3-2" stroke="#888"/></svg></span>
      <span class="w-6 flex justify-center"><svg class="w-[14px] h-[14px]" viewBox="0 0 14 14" fill="none" stroke="#999"><circle cx="7" cy="7" r="6.300"/><path d="M4 7a3 3 0 0 1 5-2M10 7a3 3 0 0 1-5 2"/></svg></span>
    </div>
    <div class="h-px bg-[#dcdcdc]"></div>
    <div class="h-[20px] flex items-center pl-[2px] text-[#777]">Transparentpause:</div>
    <div class="h-[22px] flex items-center pl-[3px]">
      <div class="w-[22px] h-[22px] bg-[#f5f5f5] rounded flex items-center pl-[2px]"><span class="w-[9px] h-[9px] bg-[#f78f85]"></span><svg class="w-2 h-2 opacity-50"><use href="#chev"/></svg></div>
      <div class="ml-[3px] w-[105px] relative flex items-center"><div class="w-full h-[8px] bg-[repeating-linear-gradient(90deg,#cfcfcf_0_1px,transparent_1px_11px)]"></div><div class="absolute inset-x-0 h-[4px] bg-[#dedede]/80"></div><div class="absolute right-0 w-[6px] h-[12px] rounded-sm bg-[#f8f8f8]"></div></div>
      <div class="ml-px flex-1 h-[22px] bg-[#f5f5f5] rounded-l flex items-center"><svg class="w-2 h-2 opacity-50"><use href="#chev"/></svg></div>
    </div>
    <div class="h-[21px] flex items-center pl-[2px] text-[#777]">Aktiv:</div>
    <div class="h-[22px] flex items-center pl-[3px]">
      <div class="w-[22px] h-[22px] bg-[#f5f5f5] rounded flex items-center pl-[2px]"><span class="w-[10px] h-[10px] rounded-full bg-[conic-gradient(#e8897c_0_35%,#5a9fd8_35%_70%,#6fae7c_70%)]"></span><svg class="w-2 h-2 opacity-50"><use href="#chev"/></svg></div>
      <div class="ml-[3px] w-[105px] relative flex items-center"><div class="w-full h-[8px] bg-[repeating-linear-gradient(90deg,#cfcfcf_0_1px,transparent_1px_11px)]"></div><div class="absolute inset-x-0 h-[4px] bg-[#dedede]/80"></div><div class="absolute right-0 w-[6px] h-[12px] rounded-sm bg-[#f8f8f8]"></div></div>
    </div>
    <div class="h-[6px]"></div>
    <div class="h-px bg-[#dcdcdc]"></div>
    <div class="flex-1 flex items-center justify-center gap-2 pl-[2px] pt-1">
      <svg class="w-4 h-4" viewBox="0 0 16 16" fill="none"><rect x="1" y="1" width="9" height="9" stroke="#9db9d8"/><path d="M8 15l-2-4 1-1 2 1V6h1v4h3v5z" stroke="#888"/></svg>
      <svg class="w-4 h-4" viewBox="0 0 16 16" fill="none"><rect x="1" y="1" width="9" height="9" stroke="#888"/><rect x="5" y="5" width="10" height="10" stroke="#9db9d8"/></svg>
      <svg class="w-4 h-4" viewBox="0 0 16 16" fill="none"><rect x="1" y="2" width="14" height="12" stroke="#9db9d8"/><path d="M8 0v16M5 8l1.500-1.500M5 8l1.500 1.500M11 8L9.500 6.500M11 8l-1.500 1.500" stroke="#888"/></svg>
      <svg class="w-4 h-4" viewBox="0 0 16 16" fill="none" stroke="#999"><path d="M2 2h9v9H2zM2 8l6-6M5 11l6-6"/><path d="M8 14l7-6"/></svg>
    </div>
  </div>
</div>

<!-- hint bar -->
<div class="h-[18px] flex items-center bg-linear-to-b from-[#e8e8e8] to-[#d9d9d9] whitespace-nowrap">
  <span class="pl-[3px] w-[1168px] shrink-0 text-[9.5px]">Klicken Sie mit dem Cursor auf ein Element oder ziehen Sie einen Auswahlbereich auf. Drücken Sie für Morphbearbeitung Strg/Ctrl+Umsch, um zwischen Element-/Unterelement-Auswahl zu wechseln.</span>
  <svg class="w-[14px] h-[12px] shrink-0" viewBox="0 0 14 12" fill="none" stroke="#333"><rect x="3" y="3" width="10.500" height="8.500"/><path d="M3 5.500h10.500" stroke-width="1.500"/><path d="M.5 8.500V.5h10.500v2.500"/></svg>
  <div class="ml-[4px] w-px h-[12px] bg-[#aaa]"></div>
  <span class="ml-[12px] text-[10.5px] text-[#444]">GRAPHISOFT <span class="text-[#888]">ID</span></span>
</div>
</body>
</html>
